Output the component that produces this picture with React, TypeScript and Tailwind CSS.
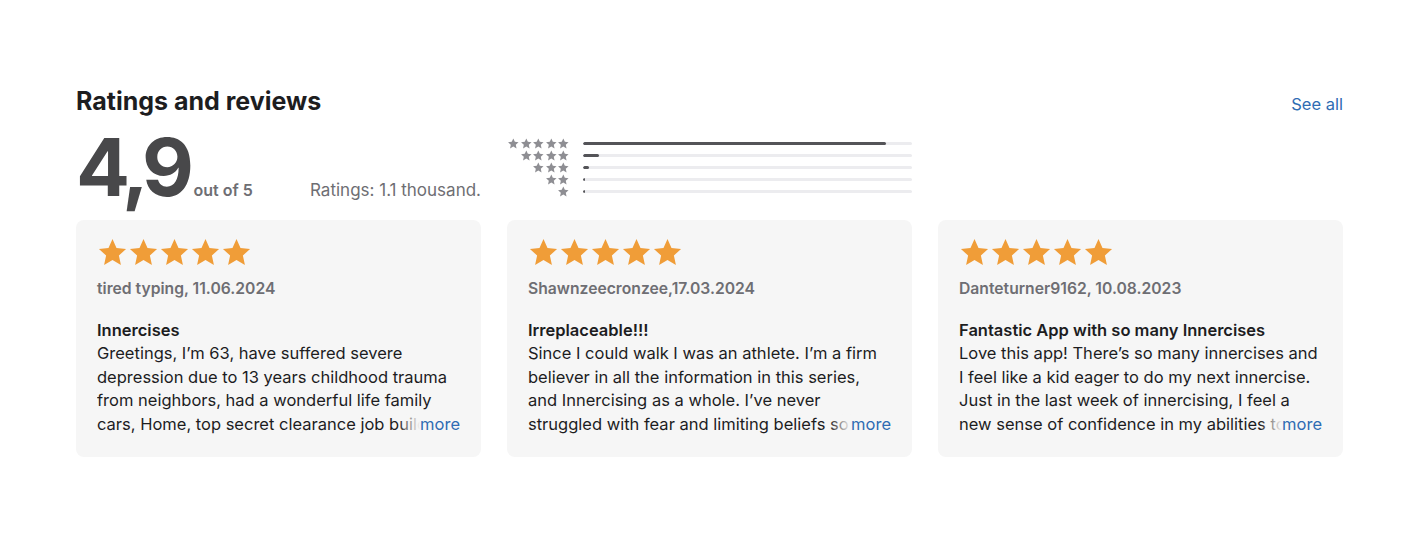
import React from "react";

const STAR = "M12 1.6l3.09 6.86 7.41.78-5.55 5.02 1.56 7.34L12 17.8l-6.51 3.8 1.56-7.34L1.5 9.24l7.41-.78L12 1.6z";

function BigStar() {
  return (
    <svg width="31" height="31" viewBox="0 0 24 24" className="block">
      <path d={STAR} fill="#f09d38" />
    </svg>
  );
}

function SmallStar() {
  return (
    <svg width="12.6" height="11" viewBox="0 0 24 22" className="block">
      <path d={STAR} fill="#8e8e93" transform="translate(0,-0.8)" />
    </svg>
  );
}

const hist = [
  { n: 5, pct: 92 },
  { n: 4, pct: 5 },
  { n: 3, pct: 1.8 },
  { n: 2, pct: 0.7 },
  { n: 1, pct: 0.7 },
];

const reviews = [
  {
    author: "tired typing, 11.06.2024",
    title: "Innercises",
    body:
      "Greetings, I’m 63, have suffered severe depression due to 13 years childhood trauma from neighbors, had a wonderful life family cars, Home, top secret clearance job building weapons systems and then it all fell apart when the memories came back.",
  },
  {
    author: "Shawnzeecronzee,17.03.2024",
    title: "Irreplaceable!!!",
    body:
      "Since I could walk I was an athlete. I’m a firm believer in all the information in this series, and Innercising as a whole. I’ve never struggled with fear and limiting beliefs so much as I have in the last few years of my life.",
  },
  {
    author: "Danteturner9162, 10.08.2023",
    title: "Fantastic App with so many Innercises",
    body:
      "Love this app! There’s so many innercises and I feel like a kid eager to do my next innercise. Just in the last week of innercising, I feel a new sense of confidence in my abilities to grow and change every single day.",
  },
];

function Card({ r }: { r: (typeof reviews)[number] }) {
  return (
    <div className="bg-[#f6f6f6] rounded-[8px] h-[237px] px-[21px] pt-[17px]">
      <div className="flex">
        {[0, 1, 2, 3, 4].map((i) => (
          <BigStar key={i} />
        ))}
      </div>
      <div className="mt-[11px] text-[15.7px] leading-[20px] font-semibold text-[#6e6e73]">
        {r.author}
      </div>
      <div className="mt-[20px] text-[16.5px] leading-[23.4px] text-[#1d1d1f]">
        <div className="font-semibold">{r.title}</div>
        <div className="relative h-[93.6px] overflow-hidden">
          <p>{r.body}</p>
          <div className="absolute right-0 bottom-0 flex h-[23.4px]">
            <div className="w-[22px] bg-gradient-to-r from-[#f6f6f6]/0 to-[#f6f6f6]" />
            <span className="bg-[#f6f6f6] text-[#2f6cb3]">more</span>
          </div>
        </div>
      </div>
    </div>
  );
}

export default function App() {
  return (
    <div className="bg-white w-[1423px] h-[549px] font-['Inter','Liberation_Sans',sans-serif]">
      <div className="ml-[76px] w-[1267px] pt-[89px]">
        <div className="flex items-baseline justify-between">
          <h2 className="text-[25px] leading-[24px] font-bold text-[#1d1d1f]">
            Ratings and reviews
          </h2>
          <a className="text-[16.5px] leading-[24px] text-[#2f6cb3]">See all</a>
        </div>
        <div className="grid grid-cols-3 gap-x-[26px] mt-[11px]">
          <div className="flex items-baseline">
            <span className="text-[80px] leading-[80px] font-bold text-[#48484a] tracking-[-5.5px]">
              4,9
            </span>
            <span className="ml-[5px] text-[16px] font-semibold text-[#6e6e73]">out of 5</span>
            <span className="ml-auto text-[17px] text-[#6e6e73]">Ratings: 1.1 thousand.</span>
          </div>
          <div className="pt-[10px] flex flex-col">
            {hist.map((h) => (
              <div key={h.n} className="flex items-center h-[12px]">
                <div className="w-[63px] flex justify-end">
                  {Array.from({ length: h.n }).map((_, i) => (
                    <SmallStar key={i} />
                  ))}
                </div>
                <div className="ml-[13px] flex-1 h-[3px] rounded-full bg-[#ececef] overflow-hidden">
                  <div
                    className="h-full rounded-full bg-[#545458]"
                    style={{ width: `${h.pct}%` }}
                  />
                </div>
              </div>
            ))}
          </div>
          <div />
        </div>
        <div className="grid grid-cols-3 gap-x-[26px] mt-[13px]">
          {reviews.map((r) => (
            <Card key={r.author} r={r} />
          ))}
        </div>
      </div>
    </div>
  );
}
